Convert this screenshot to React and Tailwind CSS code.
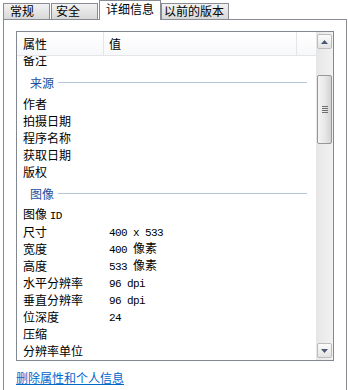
import React from "react";

const CJK = "font-['Noto_Sans_CJK_SC','Noto_Sans',sans-serif]";
const MONO = "font-['Liberation_Mono','DejaVu_Sans_Mono',monospace] text-[11px] tracking-[-0.6px]";

function Row({ label, value, className = "" }) {
  return (
    <div className={`flex h-[17px] items-center leading-[17px] text-black ${className}`}>
      <div className="w-[86px] ml-[6px] shrink-0 whitespace-nowrap">{label}</div>
      <div className="whitespace-nowrap">{value}</div>
    </div>
  );
}

function Group({ title }) {
  return (
    <div className="flex h-[26px] items-center pl-[13px] pr-[9px]">
      <span className="text-[#1e4d9b] leading-[17px] whitespace-nowrap">{title}</span>
      <div className="ml-[4px] h-px flex-1 bg-[#b3c6da]" />
    </div>
  );
}

function Arrow({ up }) {
  return (
    <svg width="7" height="4" viewBox="0 0 7 4">
      {up ? (
        <path d="M0 4 L3.5 0 L7 4 Z" fill="#4a5a75" />
      ) : (
        <path d="M0 0 L3.5 4 L7 0 Z" fill="#4a5a75" />
      )}
    </svg>
  );
}

function ScrollButton({ up }) {
  return (
    <div className="mx-[1px] h-[15px] rounded-[2px] border border-[#bcbcbc] bg-gradient-to-b from-[#fbfbfb] to-[#e3e3e3] flex items-center justify-center">
      <Arrow up={up} />
    </div>
  );
}

function Scrollbar() {
  return (
    <div className="w-[17px] shrink-0 flex flex-col pt-[2px] pb-[2px] bg-gradient-to-r from-[#e6e6e6] to-[#f2f2f2]">
      <ScrollButton up />
      <div className="mt-[26px] mx-[1px] h-[69px] rounded-[2px] border border-[#979797] bg-gradient-to-r from-[#f4f4f4] via-[#e8e8e8] to-[#d3d3d3] flex flex-col items-center justify-center gap-[1px]">
        <div className="w-[6px] h-px bg-[#6f6f6f]" />
        <div className="w-[6px] h-px bg-[#6f6f6f]" />
        <div className="w-[6px] h-px bg-[#6f6f6f]" />
        <div className="w-[6px] h-px bg-[#6f6f6f]" />
      </div>
      <div className="flex-1" />
      <ScrollButton />
    </div>
  );
}

function Tab({ children, w, selected, pl, ml }) {
  if (selected) {
    return (
      <div
        className={`relative z-10 -mb-px h-[20px] ${w} ${ml} ${pl} border border-b-0 border-[#898c95] bg-white leading-[16px] text-black whitespace-nowrap`}
      >
        {children}
      </div>
    );
  }
  return (
    <div
      className={`h-[16px] ${w} ${ml} ${pl} border border-b-0 border-[#898c95] bg-gradient-to-b from-[#f2f2f2] to-[#d8d8d8] leading-[13px] text-black whitespace-nowrap`}
    >
      {children}
    </div>
  );
}

export default function App() {
  return (
    <div className={`w-[348px] h-[390px] overflow-hidden bg-white text-[12px] ${CJK}`}>
      <div className="flex items-end h-[19px] pl-[3px]">
        <Tab w="w-[47px]" pl="pl-[6px]" ml="">常规</Tab>
        <Tab w="w-[47px]" pl="pl-[4px]" ml="ml-[1px]">安全</Tab>
        <Tab w="w-[62px]" pl="pl-[6px]" ml="ml-[1px]" selected>详细信息</Tab>
        <Tab w="w-[68px]" pl="pl-[2px]" ml="">以前的版本</Tab>
      </div>
      <div className="ml-[3px] w-[344px] h-[400px] border border-[#898c95] bg-white pl-[12px] pt-[11px]">
        <div className="w-[318px] h-[330px] border border-[#828790] flex">
          <div className="w-[299px] flex flex-col">
            <div className="relative h-[24px] shrink-0 border-b border-[#e5e5e5] bg-gradient-to-b from-white to-[#f7f8fa] flex items-center leading-[17px] text-black">
              <div className="w-[86px] ml-[6px] shrink-0">属性</div>
              <div>值</div>
              <div className="absolute left-[86px] top-0 h-full w-px bg-[#e5e5e5]" />
              <div className="absolute left-[279px] top-0 h-full w-px bg-[#e5e5e5]" />
            </div>
            <div className="flex-1 overflow-hidden">
              <div className="h-[13px] overflow-hidden">
                <Row label="备注" className="-mt-[5px]" />
              </div>
              <Group title="来源" />
              <Row label="作者" />
              <Row label="拍摄日期" />
              <Row label="程序名称" />
              <Row label="获取日期" />
              <Row label="版权" />
              <Group title="图像" />
              <Row label={<span>图像 <span className={MONO}>ID</span></span>} />
              <Row label="尺寸" value={<span className={MONO}>400 x 533</span>} />
              <Row label="宽度" value={<span><span className={MONO}>400 </span>像素</span>} />
              <Row label="高度" value={<span><span className={MONO}>533 </span>像素</span>} />
              <Row label="水平分辨率" value={<span className={MONO}>96 dpi</span>} />
              <Row label="垂直分辨率" value={<span className={MONO}>96 dpi</span>} />
              <Row label="位深度" value={<span className={MONO}>24</span>} />
              <Row label="压缩" />
              <Row label="分辨率单位" />
            </div>
          </div>
          <Scrollbar />
        </div>
        <div className="mt-[9px] leading-[16px]">
          <span className="text-[#0066cc] underline">删除属性和个人信息</span>
        </div>
      </div>
    </div>
  );
}
